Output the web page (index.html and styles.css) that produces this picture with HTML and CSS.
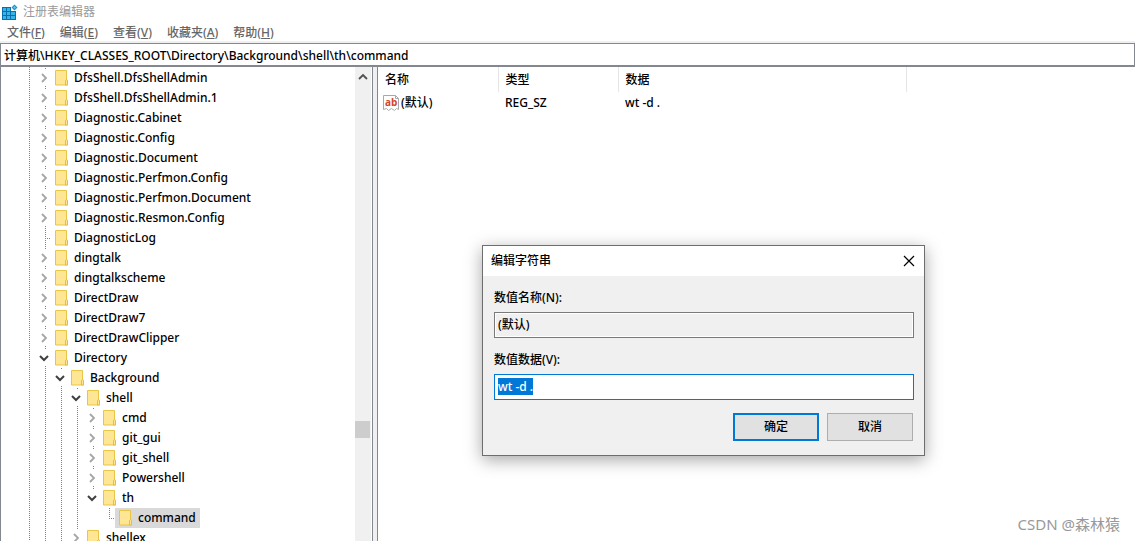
FILE: index.html
```html
<!DOCTYPE html>
<html lang="zh-CN">
<head>
  <meta charset="UTF-8">
  <title>注册表编辑器</title>
  <link rel="stylesheet" href="styles.css">
</head>
<body>
  <!-- 共用图标 -->
  <svg class="sprite" aria-hidden="true">
    <symbol id="folder" viewBox="0 0 14 16">
      <path d="M0.5 0.5h11v9.5h1v5h-12z" fill="#ffe694" stroke="#e8c545"/>
      <path d="M10.5 15V10.5q1-1.500 2 0V15z" fill="#ffe694" stroke="#e8bf30"/>
    </symbol>
    <symbol id="closed" viewBox="0 0 14 14">
      <path d="M5 3l4 4-4 4" fill="none" stroke="#a6a6a6" stroke-width="1.800"/>
    </symbol>
    <symbol id="opened" viewBox="0 0 14 14">
      <path d="M3 5l4 4 4-4" fill="none" stroke="#404040" stroke-width="2"/>
    </symbol>
  </svg>

  <header class="titlebar">
    <svg class="app-icon" width="16" height="16" viewBox="0 0 16 16">
      <path d="M0 3h11v3h3v10H0z" fill="#0a6fae"/>
      <path d="M1 4h3v3H1zM5 4h3v3H5zM1 8h3v3H1zM5 8h3v3H5zM9 8h4v3H9zM1 12h3v3H1zM5 12h3v3H5zM9 12h4v3H9z" fill="#35b5e5"/>
      <path d="M9 3h6v4H9z" fill="#fff"/>
      <path d="M12.500 0.500l3 3-3 3-3-3z" fill="#1e90c8"/>
      <path d="M12.500 2l1.500 1.500-1.500 1.500-1.500-1.500z" fill="#5cc8ee"/>
    </svg>
    <span>注册表编辑器</span>
  </header>

  <nav class="menu">
    <button>文件(<u>F</u>)</button>
    <button>编辑(<u>E</u>)</button>
    <button>查看(<u>V</u>)</button>
    <button>收藏夹(<u>A</u>)</button>
    <button>帮助(<u>H</u>)</button>
  </nav>

  <input class="address" type="text" aria-label="地址" value="计算机\HKEY_CLASSES_ROOT\Directory\Background\shell\th\command">

  <main class="panes">
    <div class="tree-pane">
      <ul class="tree">
        <li><div class="row"><button class="toggle"><svg><use href="#closed"/></svg></button><span class="node"><svg><use href="#folder"/></svg>DfsShell.DfsShellAdmin</span></div></li>
        <li><div class="row"><button class="toggle"><svg><use href="#closed"/></svg></button><span class="node"><svg><use href="#folder"/></svg>DfsShell.DfsShellAdmin.1</span></div></li>
        <li><div class="row"><button class="toggle"><svg><use href="#closed"/></svg></button><span class="node"><svg><use href="#folder"/></svg>Diagnostic.Cabinet</span></div></li>
        <li><div class="row"><button class="toggle"><svg><use href="#closed"/></svg></button><span class="node"><svg><use href="#folder"/></svg>Diagnostic.Config</span></div></li>
        <li><div class="row"><button class="toggle"><svg><use href="#closed"/></svg></button><span class="node"><svg><use href="#folder"/></svg>Diagnostic.Document</span></div></li>
        <li><div class="row"><button class="toggle"><svg><use href="#closed"/></svg></button><span class="node"><svg><use href="#folder"/></svg>Diagnostic.Perfmon.Config</span></div></li>
        <li><div class="row"><button class="toggle"><svg><use href="#closed"/></svg></button><span class="node"><svg><use href="#folder"/></svg>Diagnostic.Perfmon.Document</span></div></li>
        <li><div class="row"><button class="toggle"><svg><use href="#closed"/></svg></button><span class="node"><svg><use href="#folder"/></svg>Diagnostic.Resmon.Config</span></div></li>
        <li><div class="row"><span class="leaf"></span><span class="node"><svg><use href="#folder"/></svg>DiagnosticLog</span></div></li>
        <li><div class="row"><button class="toggle"><svg><use href="#closed"/></svg></button><span class="node"><svg><use href="#folder"/></svg>dingtalk</span></div></li>
        <li><div class="row"><button class="toggle"><svg><use href="#closed"/></svg></button><span class="node"><svg><use href="#folder"/></svg>dingtalkscheme</span></div></li>
        <li><div class="row"><button class="toggle"><svg><use href="#closed"/></svg></button><span class="node"><svg><use href="#folder"/></svg>DirectDraw</span></div></li>
        <li><div class="row"><button class="toggle"><svg><use href="#closed"/></svg></button><span class="node"><svg><use href="#folder"/></svg>DirectDraw7</span></div></li>
        <li><div class="row"><button class="toggle"><svg><use href="#closed"/></svg></button><span class="node"><svg><use href="#folder"/></svg>DirectDrawClipper</span></div></li>
        <li class="more">
          <div class="row"><button class="toggle"><svg><use href="#opened"/></svg></button><span class="node"><svg><use href="#folder"/></svg>Directory</span></div>
          <ul>
            <li class="more">
              <div class="row"><button class="toggle"><svg><use href="#opened"/></svg></button><span class="node"><svg><use href="#folder"/></svg>Background</span></div>
              <ul>
                <li>
                  <div class="row"><button class="toggle"><svg><use href="#opened"/></svg></button><span class="node"><svg><use href="#folder"/></svg>shell</span></div>
                  <ul>
                    <li><div class="row"><button class="toggle"><svg><use href="#closed"/></svg></button><span class="node"><svg><use href="#folder"/></svg>cmd</span></div></li>
                    <li><div class="row"><button class="toggle"><svg><use href="#closed"/></svg></button><span class="node"><svg><use href="#folder"/></svg>git_gui</span></div></li>
                    <li><div class="row"><button class="toggle"><svg><use href="#closed"/></svg></button><span class="node"><svg><use href="#folder"/></svg>git_shell</span></div></li>
                    <li><div class="row"><button class="toggle"><svg><use href="#closed"/></svg></button><span class="node"><svg><use href="#folder"/></svg>Powershell</span></div></li>
                    <li>
                      <div class="row"><button class="toggle"><svg><use href="#opened"/></svg></button><span class="node"><svg><use href="#folder"/></svg>th</span></div>
                      <ul>
                        <li><div class="row"><span class="leaf"></span><span class="node selected"><svg><use href="#folder"/></svg>command</span></div></li>
                      </ul>
                    </li>
                  </ul>
                </li>
                <li><div class="row"><button class="toggle"><svg><use href="#closed"/></svg></button><span class="node"><svg><use href="#folder"/></svg>shellex</span></div></li>
              </ul>
            </li>
          </ul>
        </li>
      </ul>
      <div class="scrollbar">
        <button class="scroll-up" aria-label="向上滚动">
          <svg width="10" height="8" viewBox="0 0 10 8"><path d="M1 6l4-4 4 4" fill="none" stroke="#505050" stroke-width="1.800"/></svg>
        </button>
        <div class="track"><div class="thumb"></div></div>
      </div>
    </div>

    <div class="splitter"></div>

    <div class="list-pane">
      <table class="values">
        <thead>
          <tr><th class="col-name">名称</th><th class="col-type">类型</th><th class="col-data">数据</th></tr>
        </thead>
        <tbody>
          <tr>
            <td class="name">
              <svg width="16" height="16" viewBox="0 0 16 16">
                <path d="M0.5 0.500h12l3 3v11l-2-1-2 2-3-2-3 2-2-2-3 1z" fill="#fff" stroke="#a8a8a8"/>
                <path d="M12.500 0.500v3h3" fill="none" stroke="#a8a8a8"/>
                <text x="2" y="11">ab</text>
              </svg>(默认)
            </td>
            <td>REG_SZ</td>
            <td>wt -d .</td>
          </tr>
        </tbody>
      </table>
    </div>
  </main>

  <form class="dialog" role="dialog" aria-labelledby="dialogTitle">
    <div class="dialog-title">
      <span id="dialogTitle">编辑字符串</span>
      <button type="button" class="close" aria-label="关闭">
        <svg width="12" height="12" viewBox="0 0 12 12"><path d="M1 1l10 10M11 1L1 11" stroke="#000" stroke-width="1.200"/></svg>
      </button>
    </div>
    <div class="dialog-body">
      <label for="valueName">数值名称(N):</label>
      <input type="text" id="valueName" value="(默认)" readonly>
      <label for="valueData">数值数据(V):</label>
      <input type="text" id="valueData" value="wt -d ." autofocus>
      <div class="buttons">
        <button type="button" class="btn btn-default">确定</button>
        <button type="button" class="btn">取消</button>
      </div>
    </div>
  </form>

  <div class="watermark">CSDN @森林猿</div>

  <script src="main.js"></script>
</body>
</html>
```
FILE: styles.css
```css
* {
  box-sizing: border-box;
}
body {
  margin: 0;
  height: 100vh;
  overflow: hidden;
  display: flex;
  flex-direction: column;
  background: #fff;
  color: #000;
  font: 500 12px/20px "Noto Sans", "Noto Sans CJK SC", sans-serif;
}
button, input {
  font: inherit;
  color: inherit;
  margin: 0;
  padding: 0;
  border: none;
  border-radius: 0;
  background: none;
}
.sprite {
  position: absolute;
  width: 0;
  height: 0;
}

/* 标题栏和菜单 */
.titlebar {
  display: flex;
  align-items: center;
  gap: 5px;
  height: 23px;
  padding-left: 2px;
  color: #999;
  font-weight: 400;
}
.menu {
  display: flex;
  gap: 15px;
  height: 20px;
  padding-left: 7px;
  color: #666;
  border-bottom: 2px solid #f0f0f0;
}
.address {
  width: 100%;
  height: 24px;
  flex: none;
  padding: 0 3px;
  border: 1px solid #828790;
  border-bottom-width: 2px;
}

/* 左侧树 */
.panes {
  display: flex;
  flex: 1;
  min-height: 0;
}
.tree-pane {
  display: flex;
  width: 373px;
  flex: none;
  border: solid #828790;
  border-width: 0 1px;
  overflow: hidden;
}
.tree, .tree ul {
  list-style: none;
  margin: 0;
  padding: 0;
}
.tree {
  flex: 1;
  padding: 1px 0 0 36px;
  background: repeating-linear-gradient(#808080 0 1px, transparent 1px 2px) 28px 0 / 1px 100% no-repeat;
}
.tree ul {
  padding-left: 16px;
}
.tree li {
  position: relative;
}
.tree li::before {
  content: "";
  position: absolute;
  left: 8px;
  top: 0;
  bottom: 0;
  width: 1px;
  background: repeating-linear-gradient(#808080 0 1px, transparent 1px 2px);
}
.tree ul li:last-child:not(.more)::before {
  height: 10px;
}
.row {
  display: flex;
  position: relative;
  align-items: center;
  height: 20px;
}
.toggle {
  display: flex;
  align-items: center;
  width: 14px;
  height: 16px;
  background: #fff;
}
.toggle svg {
  width: 14px;
  height: 14px;
}
.leaf {
  width: 6px;
  height: 1px;
  margin-left: 8px;
  background: repeating-linear-gradient(90deg, #808080 0 1px, transparent 1px 2px);
}
.node {
  display: flex;
  align-items: center;
  gap: 5px;
  padding: 0 4px;
}
.node svg {
  width: 14px;
  height: 16px;
}
.node.selected {
  background: #d9d9d9;
}

/* 滚动条 */
.scrollbar {
  display: flex;
  flex-direction: column;
  width: 16px;
  margin-right: 1px;
  background: #f0f0f0;
}
.scroll-up {
  display: flex;
  align-items: center;
  justify-content: center;
  height: 20px;
}
.track {
  display: flex;
  flex-direction: column;
  flex: 1;
}
.track::before {
  content: "";
  flex: 334;
}
.track::after {
  content: "";
  flex: 103;
}
.thumb {
  height: 17px;
  margin-right: 1px;
  background: #cdcdcd;
}
.splitter {
  width: 4px;
  flex: none;
  background: #f0f0f0;
}

/* 右侧列表 */
.list-pane {
  flex: 1;
  border-left: 1px solid #828790;
}
.values {
  border-collapse: collapse;
  table-layout: fixed;
  width: 529px;
}
.values th {
  height: 25px;
  padding: 0 7px;
  border-right: 1px solid #e5e5e5;
  font-weight: 500;
  text-align: left;
}
.values td {
  height: 22px;
  padding: 0 7px;
}
.col-name {
  width: 120px;
}
.col-type {
  width: 120px;
}
.values .name {
  display: flex;
  align-items: center;
  gap: 2px;
  padding-left: 5px;
}
.values text {
  font: bold 10px "Open Sans", sans-serif;
  fill: #d24726;
}

/* 编辑对话框 */
.dialog {
  position: absolute;
  left: 482px;
  top: 245px;
  width: 443px;
  border: 1px solid #6e6e6e;
  background: #f0f0f0;
  box-shadow: 0 4px 16px rgba(0, 0, 0, 0.35);
}
.dialog-title {
  display: flex;
  align-items: center;
  justify-content: space-between;
  height: 30px;
  padding: 0 9px 0 8px;
  background: #fff;
}
.close {
  display: flex;
}
.dialog-body {
  display: flex;
  flex-direction: column;
  padding: 12px 10px 14px 11px;
}
.dialog-body label {
  margin-bottom: 4px;
}
.dialog-body input {
  height: 26px;
  margin-bottom: 12px;
  padding: 0 3px 2px;
  border: 1px solid #7a7a7a;
}
#valueName {
  box-shadow: inset 0 0 0 1px #fff;
}
#valueData {
  border-color: #0078d7;
  background: #fff;
  outline: none;
}
#valueData::selection {
  background: #0078d7;
  color: #fff;
}
.buttons {
  display: flex;
  justify-content: flex-end;
  gap: 8px;
  padding: 1px 1px 0 0;
}
.btn {
  width: 86px;
  height: 28px;
  border: 1px solid #adadad;
  background: #e1e1e1;
}
.btn-default {
  border: 2px solid #0078d7;
}

.watermark {
  position: absolute;
  right: 15px;
  bottom: 7px;
  font-size: 15px;
  font-weight: 400;
  color: #999;
}
```
FILE: main.js
```js
var valueData = document.getElementById('valueData');
valueData.focus();
valueData.select();
```
